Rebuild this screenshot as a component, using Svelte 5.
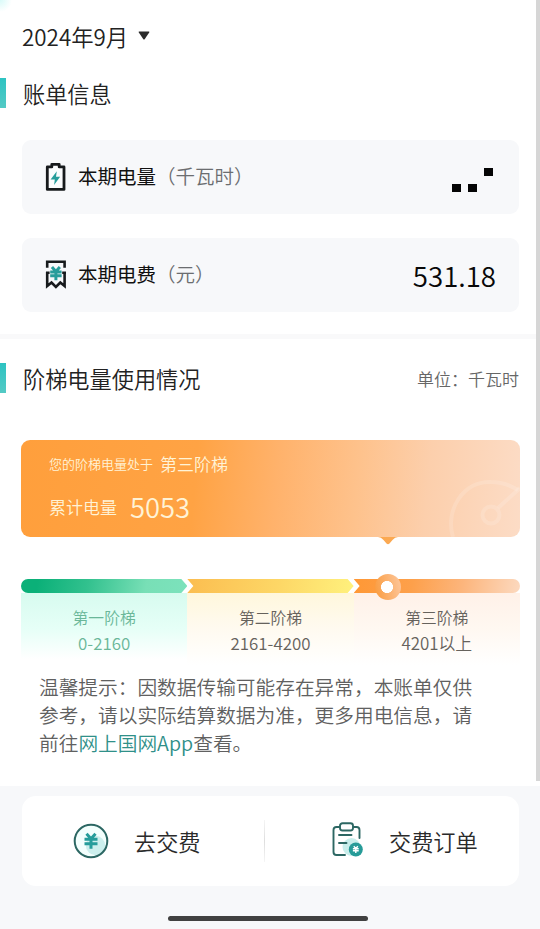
<script>
  const month = '2024年9月';

  // 阶梯数据
  const tiers = [
    { id: 'first', name: '第一阶梯', range: '0-2160' },
    { id: 'second', name: '第二阶梯', range: '2161-4200' },
    { id: 'third', name: '第三阶梯', range: '4201以上' },
  ];
</script>

{#snippet yuan()}
  <path d="M-4.5 -7 L0 -2 L4.5 -7 M0 -2 V8 M-6.5 -1.5 H6.5 M-6.5 3 H6.5" fill="none" stroke="currentColor" />
{/snippet}

<div class="page">
  <div class="scrollbar"></div>
  <main>
    <div class="month">
      <span>{month}</span>
      <svg width="12" height="9" viewBox="0 0 12 9"><path d="M1.2 .5 H10.8 Q11.8 .5 11.2 1.4 L6.8 7.9 Q6 9 5.2 7.9 L.8 1.4 Q.2 .5 1.2 .5Z" fill="#2b2b2b" /></svg>
    </div>

    <section class="bill">
      <h2>账单信息</h2>
      <div class="row">
        <svg class="row-icon" width="22" height="30" viewBox="0 0 22 30">
          <path d="M3.3 4.9 H7.8 V2.4 H15.2 V4.9 H20 V27.4 H3.3Z" fill="#fbfcfd" stroke="#171a1c" stroke-width="2.8" stroke-linejoin="round" />
          <path d="M12.8 9.3 L6.6 17.5 H10.8 L10.1 23 L16.1 14.8 H12Z" fill="#269d9b" />
        </svg>
        <span class="label">本期电量<i>（千瓦时）</i></span>
        <svg class="masked" width="41" height="24" viewBox="0 0 41 24">
          <path d="M0 16H9V24H0ZM16 16H25V24H16ZM32 0H41V8H32Z" fill="#050505" />
        </svg>
      </div>
      <div class="row">
        <svg class="row-icon" width="22" height="30" viewBox="0 0 22 30">
          <path d="M3.2 7.8 V1.8 H20.6 V7.8 M3.2 12 V26 L7.5 22.5 L11.9 27 L16.3 22.5 L20.6 26 V12 M2 12.7 H5.6 M18.2 12.7 H22" fill="none" stroke="#171a1c" stroke-width="2.6" />
          <g class="teal" transform="translate(11.9 13.2) scale(.88)" stroke-width="3.4">{@render yuan()}</g>
        </svg>
        <span class="label">本期电费<i>（元）</i></span>
        <strong>531.18</strong>
      </div>
    </section>

    <section class="usage">
      <div class="title">
        <h2>阶梯电量使用情况</h2>
        <span>单位：千瓦时</span>
      </div>

      <div class="current">
        <div class="level"><small>您的阶梯电量处于</small><span>第三阶梯</span></div>
        <div class="total"><span>累计电量</span><b>5053</b></div>
        <svg class="gauge" width="72" height="64" viewBox="0 0 72 64">
          <g fill="none" stroke="#fff" stroke-opacity=".15">
            <path d="M5 64 C-3 37 15 8 43 9 C53 9 62 12 70 17" stroke-width="4" />
            <circle cx="43" cy="42" r="8.5" stroke-width="4" />
            <path d="M50 35 L72 15" stroke-width="4" />
          </g>
        </svg>
        <svg class="pointer" width="20" height="8" viewBox="0 0 20 8"><path d="M0 0 H20 Q17 0 14.5 3 L11.5 6.5 Q10 8 8.5 6.5 L5.5 3 Q3 0 0 0Z" fill="#fba952" /></svg>
      </div>

      <div class="tiers">
        {#each tiers as tier (tier.id)}
          <div class="tier {tier.id}">
            <div class="track"></div>
            {#if tier.id === 'third'}
              <div class="knob"></div>
            {/if}
            <div class="info">
              <span class="name">{tier.name}</span>
              <span class="range">{tier.range}</span>
            </div>
          </div>
        {/each}
      </div>

      <p>温馨提示：因数据传输可能存在异常，本账单仅供<br />参考，请以实际结算数据为准，更多用电信息，请<br />前往<em>网上国网App</em>查看。</p>
    </section>
  </main>

  <footer>
    <div class="actions">
      <div class="action pay">
        <svg width="36" height="36" viewBox="0 0 36 36">
          <circle cx="18" cy="18" r="16" fill="#f3fffd" />
          <circle cx="22.5" cy="22.5" r="9.7" fill="#ccefed" />
          <circle cx="18" cy="18" r="16.3" fill="none" stroke="#2c6763" stroke-width="2" />
          <g class="teal" transform="translate(18 17.7)" stroke-width="3">{@render yuan()}</g>
        </svg>
        <span>去交费</span>
      </div>
      <div class="divider"></div>
      <div class="action order">
        <svg width="34" height="36" viewBox="0 0 34 36">
          <circle cx="20.5" cy="25" r="9" fill="#c8eeeb" />
          <path d="M8.5 5 H5.5 Q2.5 5 2.5 8 V30 Q2.5 33 5.5 33 H14 M22 5 H25.5 Q28.5 5 28.5 8 V16" fill="none" stroke="#2c6763" stroke-width="1.9" stroke-linecap="round" />
          <rect x="9" y="1.2" width="13" height="7.3" rx="2.5" fill="#fff" stroke="#2c6763" stroke-width="1.9" />
          <path d="M8 13 H20.5 M8 21 H15.5" stroke="#2c6763" stroke-width="1.9" stroke-linecap="round" />
          <circle cx="24.8" cy="27.5" r="7" fill="#269b98" />
          <g class="light" transform="translate(24.8 27.4) scale(.45)" stroke-width="3.2">{@render yuan()}</g>
        </svg>
        <span>交费订单</span>
      </div>
    </div>
    <div class="home"></div>
  </footer>
</div>

<style>
  :global(body) {
    background: #f7f8fa;
  }

  .page {
    position: relative;
    width: 540px;
    height: 929px;
    overflow: hidden;
    background: #f7f8fa;
    font-family: 'Noto Sans CJK SC', sans-serif;
    font-weight: 350;
    color: #222;
  }

  .page * {
    box-sizing: border-box;
  }

  svg {
    display: block;
    flex: none;
  }

  .scrollbar {
    position: absolute;
    top: 0;
    right: 0;
    z-index: 2;
    width: 4px;
    height: 781px;
    background: #d6d6d6;
  }

  main {
    height: 786px;
    background: radial-gradient(circle at 0 0, #d8faf8 0, #fff 12px);
  }

  .month {
    display: flex;
    align-items: center;
    gap: 10px;
    height: 72px;
    padding-left: 22px;
    font-size: 22.4px;
  }

  .month svg {
    margin-top: -2px;
  }

  h2 {
    height: 30px;
    margin: 0;
    padding-left: 17px;
    border-left: 6px solid #3dc5c3;
    border-image: linear-gradient(#2cc3c2, #55cac5) 1;
    font-size: 22.2px;
    font-weight: 350;
    line-height: 30px;
  }

  .bill {
    height: 262px;
    padding-top: 6px;
  }

  .row {
    display: flex;
    align-items: center;
    height: 74px;
    margin: 24px 21px 0 22px;
    padding: 0 22px;
    border-radius: 9px;
    background: #f7f8fa;
  }

  h2 + .row {
    margin-top: 32px;
  }

  .row-icon {
    margin-right: 12px;
  }

  .label {
    margin-top: -2px;
    color: #111;
    font-size: 19.5px;
    font-weight: 400;
    line-height: 30px;
  }

  .label i {
    color: #6b6d70;
    font-style: normal;
    font-weight: 350;
  }

  .masked {
    margin: 6px 4px 0 auto;
  }

  strong {
    margin: 0 1px 0 auto;
    color: #080808;
    font-size: 27.6px;
    font-weight: 350;
    line-height: 36px;
  }

  .teal {
    color: #269d9b;
  }

  .light {
    color: #fff;
  }

  .usage {
    border-top: 5px solid #f9f9fa;
  }

  .title {
    display: flex;
    justify-content: space-between;
    height: 101px;
    padding: 24px 21px 0 0;
  }

  .title span {
    color: #666;
    font-size: 17px;
    line-height: 32px;
  }

  .current {
    position: relative;
    height: 97px;
    margin: 0 20px 0 21px;
    padding: 9px 28px;
    border-radius: 9px;
    background: linear-gradient(95deg, #ff9f3c 0%, #ffa344 35%, #ffb26b 51%, #fec28c 67%, #fccfac 81%, #fcdcc6 100%);
    color: #fff3d6;
  }

  .level {
    display: flex;
    align-items: center;
    gap: 7px;
    height: 28px;
    font-size: 17px;
  }

  .level small {
    font-size: 13px;
  }

  .total {
    display: flex;
    align-items: center;
    gap: 13px;
    height: 40px;
    margin-top: 9px;
    font-size: 17px;
  }

  .total b {
    font-size: 27.4px;
    font-weight: 350;
  }

  .gauge {
    position: absolute;
    right: 0;
    bottom: 0;
  }

  .pointer {
    position: absolute;
    top: 97px;
    left: 357px;
  }

  .tiers {
    display: grid;
    grid-template-columns: repeat(3, 1fr);
    margin: 42px 20px 0 21px;
  }

  .tier {
    position: relative;
  }

  .track {
    height: 14px;
  }

  .first .track {
    border-radius: 7px 0 0 7px;
    background: linear-gradient(100deg, #0bb078 10%, #32c18e 40%, #78dfb6 75%, #7ce2bc);
    clip-path: polygon(0 0, calc(100% - 6px) 0, 100% 50%, calc(100% - 6px) 100%, 0 100%);
  }

  .second .track {
    background: linear-gradient(100deg, #fbbd50, #fdd766 55%, #fff17d);
    clip-path: polygon(0 0, calc(100% - 6px) 0, 100% 50%, calc(100% - 6px) 100%, 0 100%, 6px 50%);
  }

  .third .track {
    border-radius: 0 7px 7px 0;
    background: linear-gradient(100deg, #ff9835, #fda04b 35%, #fcb57c 65%, #fcd9bf);
    clip-path: polygon(0 0, 100% 0, 100% 100%, 0 100%, 6px 50%);
  }

  .knob {
    position: absolute;
    top: -5px;
    left: 21px;
    width: 26px;
    height: 26px;
    border-radius: 50%;
    background: radial-gradient(circle at 12px 50%, #fff 5.7px, transparent 6.3px), linear-gradient(80deg, #fa9b3d, #fdc79d);
  }

  .info {
    display: flex;
    flex-direction: column;
    height: 72px;
    padding-top: 12px;
    text-align: center;
    color: #66625c;
    font-size: 15.8px;
    line-height: 25px;
  }

  .range {
    font-size: 16.9px;
    line-height: 25px;
  }

  .first .info {
    background: linear-gradient(#d7fbef, #e6fff7 50%, #fff 92%);
    color: #6ab799;
  }

  .second .info {
    background: linear-gradient(#fff7dc, #fffaf0 50%, #fff);
  }

  .third .info {
    background: linear-gradient(#fff1e8, #fff8f1 50%, #fff);
  }

  p {
    margin: 8px 0 0 39px;
    color: #606060;
    font-size: 19.7px;
    line-height: 28px;
    white-space: nowrap;
  }

  em {
    color: #2f9089;
    font-style: normal;
  }

  footer {
    padding-top: 10px;
  }

  .actions {
    display: flex;
    align-items: center;
    height: 90px;
    margin: 0 21px 0 22px;
    border-radius: 14px;
    background: #fff;
    color: #2a2a2a;
    font-size: 22.2px;
  }

  .action {
    display: flex;
    align-items: center;
  }

  .action span {
    line-height: 34px;
  }

  .pay {
    width: 242px;
    padding-left: 51px;
    gap: 25px;
  }

  .divider {
    width: 1px;
    height: 42px;
    background: linear-gradient(#f5f5f5, #dedede 50%, #f5f5f5);
  }

  .order {
    padding-left: 66px;
    gap: 24px;
  }

  .order svg {
    margin-top: -3px;
  }

  .home {
    width: 200px;
    height: 5px;
    margin: 30px 0 0 168px;
    border-radius: 3px;
    background: #414141;
  }
</style>
